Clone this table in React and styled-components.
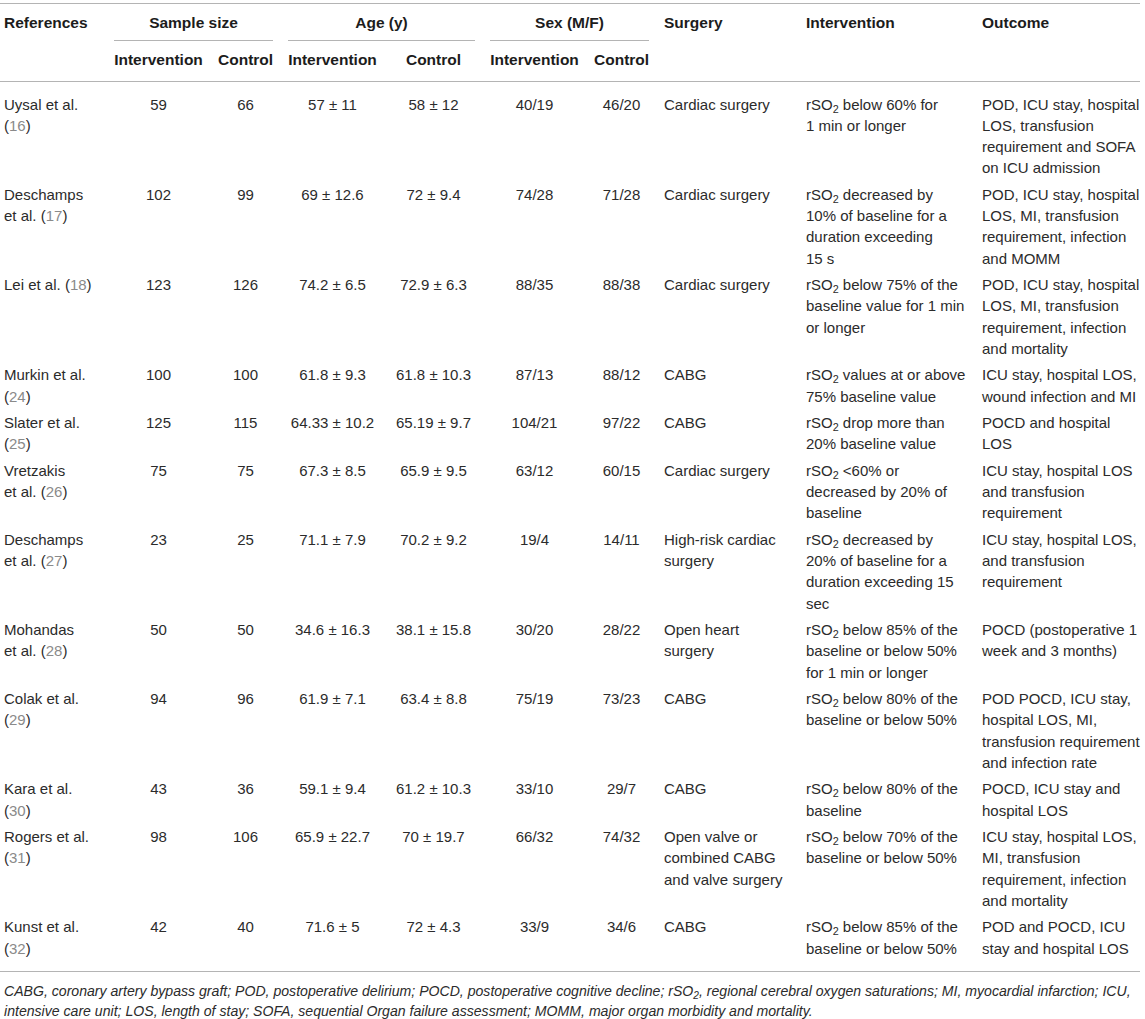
import React from "react";
import styled, { createGlobalStyle } from "styled-components";

const GlobalStyle = createGlobalStyle`
  body {
    margin: 0;
    background: #ffffff;
  }
`;

const COLS = "95px 89px 55px 89px 83px 89px 55px 127px 161px 154px";

const Page = styled.div`
  padding-top: 3px;
  font-family: "Liberation Sans", Arial, Helvetica, sans-serif;
  color: #2b2b2b;
`;

const Table = styled.div`
  width: 1140px;
`;

const Head = styled.div`
  display: grid;
  grid-template-columns: ${COLS};
  column-gap: 15px;
  row-gap: 8px;
  padding: 8px 0 11px 4px;
  border-top: 1px solid #b4b4b4;
  border-bottom: 1px solid #b4b4b4;
  font-size: 15.5px;
  font-weight: bold;
  line-height: 21.5px;
  color: #1c1c1c;
`;

const HeadCell = styled.div`
  grid-column: ${(p) => p.$col};
  grid-row: 1 / span 2;
  white-space: nowrap;
`;

const GroupHead = styled.div`
  grid-column: ${(p) => p.$col} / span 2;
  grid-row: 1;
  text-align: center;
  padding-bottom: 6px;
  border-bottom: 1px solid #b4b4b4;
  white-space: nowrap;
`;

const SubHead = styled.div`
  grid-column: ${(p) => p.$col};
  grid-row: 2;
  text-align: center;
  white-space: nowrap;
`;

const Body = styled.div`
  padding: 9px 0 10px 4px;
  border-bottom: 1px solid #b4b4b4;
`;

const Row = styled.div`
  display: grid;
  grid-template-columns: ${COLS};
  column-gap: 15px;
  padding: 2.5px 0;
  font-size: 15px;
  line-height: 21.33px;
`;

const Cell = styled.div`
  text-align: ${(p) => (p.$center ? "center" : "left")};
  white-space: nowrap;
`;

const Line = styled.span`
  display: block;
`;

const RefNum = styled.span`
  color: #8a8a8a;
`;

const Sub = styled.sub`
  font-size: 0.72em;
  line-height: 0;
  vertical-align: -0.25em;
`;

const Note = styled.p`
  margin: 0;
  padding: 9px 0 0 4px;
  font-size: 14.1px;
  font-style: italic;
  line-height: 20px;
  white-space: nowrap;
  color: #2b2b2b;
`;

// turns "rSO2" and "(16)" tokens into styled pieces
function rich(text) {
  return text.split(/(rSO2|\(\d+\))/).map((part, i) => {
    if (part === "rSO2") {
      return (
        <React.Fragment key={i}>
          rSO<Sub>2</Sub>
        </React.Fragment>
      );
    }
    const m = part.match(/^\((\d+)\)$/);
    if (m) {
      return (
        <React.Fragment key={i}>
          (<RefNum>{m[1]}</RefNum>)
        </React.Fragment>
      );
    }
    return part;
  });
}

const rows = [
  {
    ref: ["Uysal et al.", "(16)"],
    n: ["59", "66"],
    age: ["57 ± 11", "58 ± 12"],
    sex: ["40/19", "46/20"],
    surgery: ["Cardiac surgery"],
    intervention: ["rSO2 below 60% for", "1 min or longer"],
    outcome: [
      "POD, ICU stay, hospital",
      "LOS, transfusion",
      "requirement and SOFA",
      "on ICU admission",
    ],
  },
  {
    ref: ["Deschamps", "et al. (17)"],
    n: ["102", "99"],
    age: ["69 ± 12.6", "72 ± 9.4"],
    sex: ["74/28", "71/28"],
    surgery: ["Cardiac surgery"],
    intervention: [
      "rSO2 decreased by",
      "10% of baseline for a",
      "duration exceeding",
      "15 s",
    ],
    outcome: [
      "POD, ICU stay, hospital",
      "LOS, MI, transfusion",
      "requirement, infection",
      "and MOMM",
    ],
  },
  {
    ref: ["Lei et al. (18)"],
    n: ["123", "126"],
    age: ["74.2 ± 6.5", "72.9 ± 6.3"],
    sex: ["88/35", "88/38"],
    surgery: ["Cardiac surgery"],
    intervention: [
      "rSO2 below 75% of the",
      "baseline value for 1 min",
      "or longer",
    ],
    outcome: [
      "POD, ICU stay, hospital",
      "LOS, MI, transfusion",
      "requirement, infection",
      "and mortality",
    ],
  },
  {
    ref: ["Murkin et al.", "(24)"],
    n: ["100", "100"],
    age: ["61.8 ± 9.3", "61.8 ± 10.3"],
    sex: ["87/13", "88/12"],
    surgery: ["CABG"],
    intervention: ["rSO2 values at or above", "75% baseline value"],
    outcome: ["ICU stay, hospital LOS,", "wound infection and MI"],
  },
  {
    ref: ["Slater et al.", "(25)"],
    n: ["125", "115"],
    age: ["64.33 ± 10.2", "65.19 ± 9.7"],
    sex: ["104/21", "97/22"],
    surgery: ["CABG"],
    intervention: ["rSO2 drop more than", "20% baseline value"],
    outcome: ["POCD and hospital", "LOS"],
  },
  {
    ref: ["Vretzakis", "et al. (26)"],
    n: ["75", "75"],
    age: ["67.3 ± 8.5", "65.9 ± 9.5"],
    sex: ["63/12", "60/15"],
    surgery: ["Cardiac surgery"],
    intervention: ["rSO2 <60% or", "decreased by 20% of", "baseline"],
    outcome: ["ICU stay, hospital LOS", "and transfusion", "requirement"],
  },
  {
    ref: ["Deschamps", "et al. (27)"],
    n: ["23", "25"],
    age: ["71.1 ± 7.9", "70.2 ± 9.2"],
    sex: ["19/4", "14/11"],
    surgery: ["High-risk cardiac", "surgery"],
    intervention: [
      "rSO2 decreased by",
      "20% of baseline for a",
      "duration exceeding 15",
      "sec",
    ],
    outcome: ["ICU stay, hospital LOS,", "and transfusion", "requirement"],
  },
  {
    ref: ["Mohandas", "et al. (28)"],
    n: ["50", "50"],
    age: ["34.6 ± 16.3", "38.1 ± 15.8"],
    sex: ["30/20", "28/22"],
    surgery: ["Open heart", "surgery"],
    intervention: [
      "rSO2 below 85% of the",
      "baseline or below 50%",
      "for 1 min or longer",
    ],
    outcome: ["POCD (postoperative 1", "week and 3 months)"],
  },
  {
    ref: ["Colak et al.", "(29)"],
    n: ["94", "96"],
    age: ["61.9 ± 7.1", "63.4 ± 8.8"],
    sex: ["75/19", "73/23"],
    surgery: ["CABG"],
    intervention: ["rSO2 below 80% of the", "baseline or below 50%"],
    outcome: [
      "POD POCD, ICU stay,",
      "hospital LOS, MI,",
      "transfusion requirement",
      "and infection rate",
    ],
  },
  {
    ref: ["Kara et al.", "(30)"],
    n: ["43", "36"],
    age: ["59.1 ± 9.4", "61.2 ± 10.3"],
    sex: ["33/10", "29/7"],
    surgery: ["CABG"],
    intervention: ["rSO2 below 80% of the", "baseline"],
    outcome: ["POCD, ICU stay and", "hospital LOS"],
  },
  {
    ref: ["Rogers et al.", "(31)"],
    n: ["98", "106"],
    age: ["65.9 ± 22.7", "70 ± 19.7"],
    sex: ["66/32", "74/32"],
    surgery: ["Open valve or", "combined CABG", "and valve surgery"],
    intervention: ["rSO2 below 70% of the", "baseline or below 50%"],
    outcome: [
      "ICU stay, hospital LOS,",
      "MI, transfusion",
      "requirement, infection",
      "and mortality",
    ],
  },
  {
    ref: ["Kunst et al.", "(32)"],
    n: ["42", "40"],
    age: ["71.6 ± 5", "72 ± 4.3"],
    sex: ["33/9", "34/6"],
    surgery: ["CABG"],
    intervention: ["rSO2 below 85% of the", "baseline or below 50%"],
    outcome: ["POD and POCD, ICU", "stay and hospital LOS"],
  },
];

function Lines({ lines }) {
  return lines.map((l, i) => <Line key={i}>{rich(l)}</Line>);
}

export default function App() {
  return (
    <Page>
      <GlobalStyle />
      <Table>
        <Head>
          <HeadCell $col={1}>References</HeadCell>
          <GroupHead $col={2}>Sample size</GroupHead>
          <GroupHead $col={4}>Age (y)</GroupHead>
          <GroupHead $col={6}>Sex (M/F)</GroupHead>
          <HeadCell $col={8}>Surgery</HeadCell>
          <HeadCell $col={9}>Intervention</HeadCell>
          <HeadCell $col={10}>Outcome</HeadCell>
          {[2, 3, 4, 5, 6, 7].map((c) => (
            <SubHead key={c} $col={c}>
              {c % 2 === 0 ? "Intervention" : "Control"}
            </SubHead>
          ))}
        </Head>
        <Body>
          {rows.map((r, i) => (
            <Row key={i}>
              <Cell>
                <Lines lines={r.ref} />
              </Cell>
              {[...r.n, ...r.age, ...r.sex].map((v, j) => (
                <Cell key={j} $center>
                  {v}
                </Cell>
              ))}
              <Cell>
                <Lines lines={r.surgery} />
              </Cell>
              <Cell>
                <Lines lines={r.intervention} />
              </Cell>
              <Cell>
                <Lines lines={r.outcome} />
              </Cell>
            </Row>
          ))}
        </Body>
        <Note>
          CABG, coronary artery bypass graft; POD, postoperative delirium;
          POCD, postoperative cognitive decline; {rich("rSO2")}, regional
          cerebral oxygen saturations; MI, myocardial infarction; ICU,
          <br />
          intensive care unit; LOS, length of stay; SOFA, sequential Organ
          failure assessment; MOMM, major organ morbidity and mortality.
        </Note>
      </Table>
    </Page>
  );
}
